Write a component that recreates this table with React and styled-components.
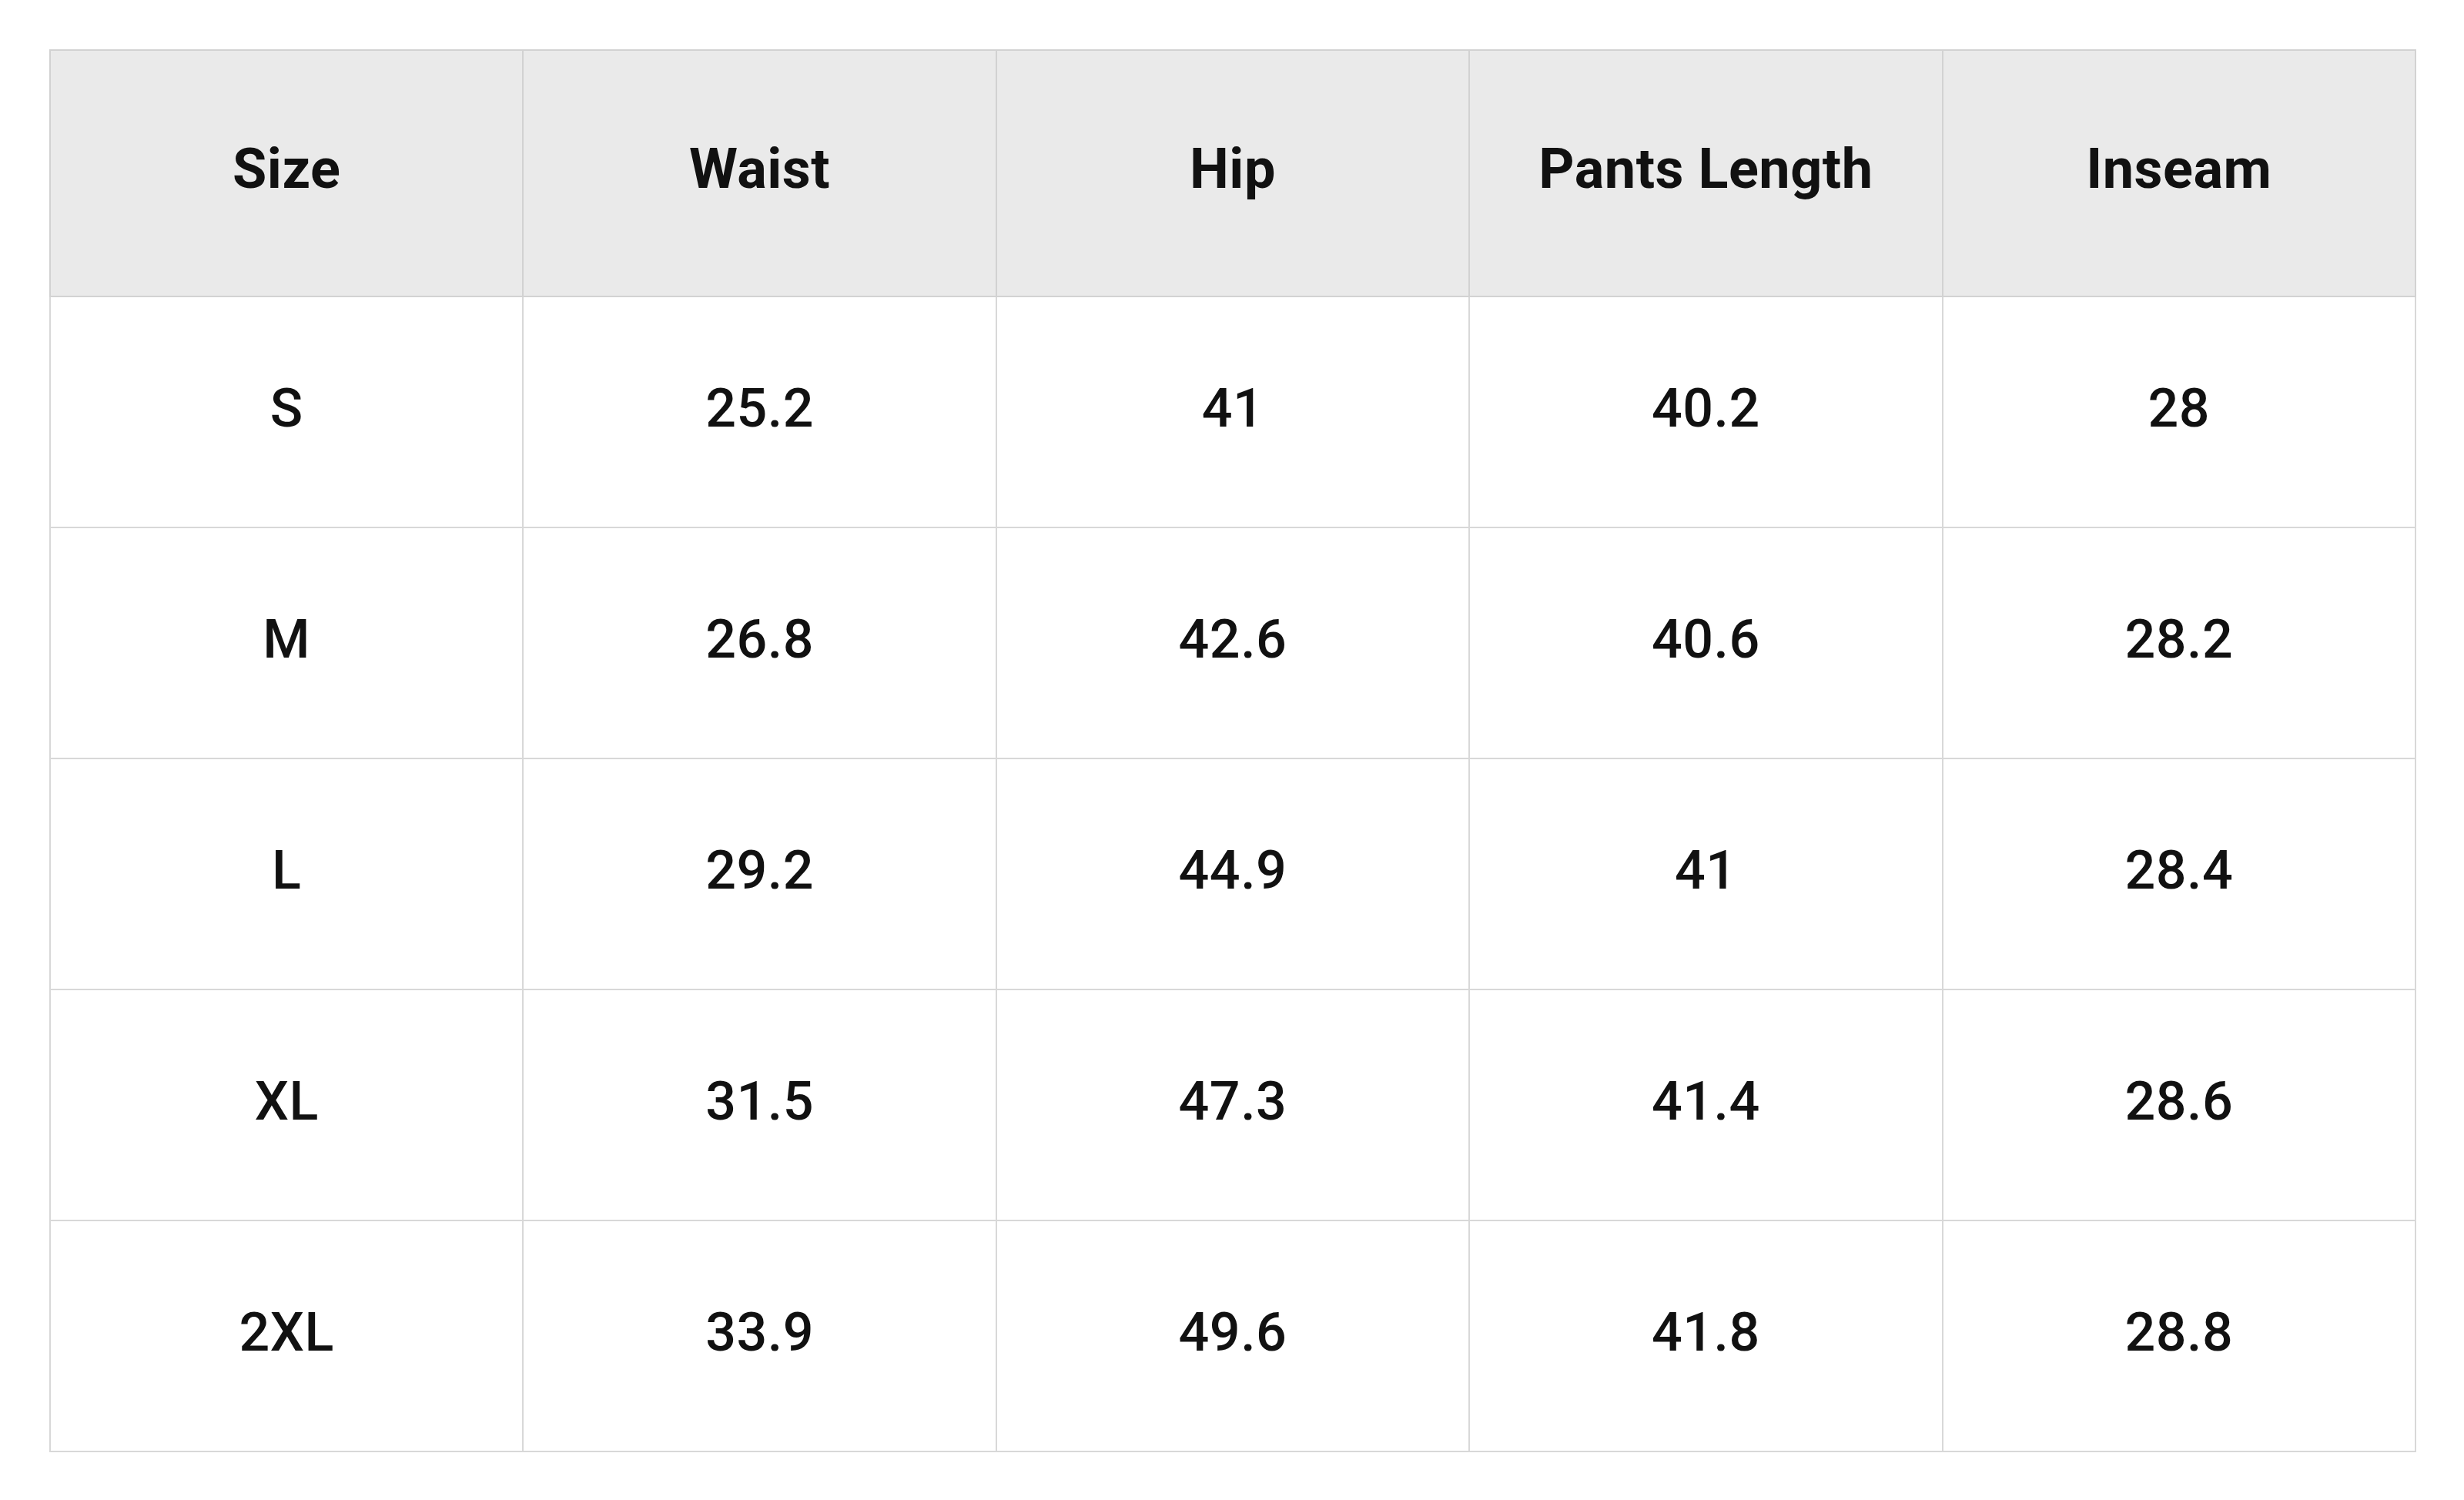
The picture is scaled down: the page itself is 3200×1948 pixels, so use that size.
import styled, { createGlobalStyle } from 'styled-components'

const GlobalStyle = createGlobalStyle`
  body {
    margin: 0;
    background: #ffffff;
    font-family: Roboto, "Liberation Sans", sans-serif;
    color: #111111;
  }
`

const Page = styled.div`
  padding: 64px 0 0 64px;
`

const SizeTable = styled.table`
  width: 3074px;
  border-collapse: collapse;
  table-layout: fixed;
  border: 2px solid #cccccc;
`

const HeadCell = styled.th`
  height: 306px;
  background: #eaeaea;
  border: 2px solid #d2d2d2;
  font-size: 72px;
  font-weight: 700;
  letter-spacing: 0.5px;
  text-align: center;
  vertical-align: middle;
  padding: 0 0 12px 0;
`

const Cell = styled.td`
  height: 288px;
  border: 2px solid #d8d8d8;
  font-size: 70px;
  font-weight: 500;
  letter-spacing: 0.5px;
  text-align: center;
  vertical-align: middle;
  padding: 0 0 10px 0;
`

const columns = ['Size', 'Waist', 'Hip', 'Pants Length', 'Inseam']

const rows = [
  ['S', '25.2', '41', '40.2', '28'],
  ['M', '26.8', '42.6', '40.6', '28.2'],
  ['L', '29.2', '44.9', '41', '28.4'],
  ['XL', '31.5', '47.3', '41.4', '28.6'],
  ['2XL', '33.9', '49.6', '41.8', '28.8'],
]

const App = () => {
  return (
    <>
      <GlobalStyle />
      <Page>
        <SizeTable>
          <thead>
            <tr>
              {columns.map((col) => (
                <HeadCell key={col}>{col}</HeadCell>
              ))}
            </tr>
          </thead>
          <tbody>
            {rows.map((row) => (
              <tr key={row[0]}>
                {row.map((value, i) => (
                  <Cell key={i}>{value}</Cell>
                ))}
              </tr>
            ))}
          </tbody>
        </SizeTable>
      </Page>
    </>
  )
}

export default App
